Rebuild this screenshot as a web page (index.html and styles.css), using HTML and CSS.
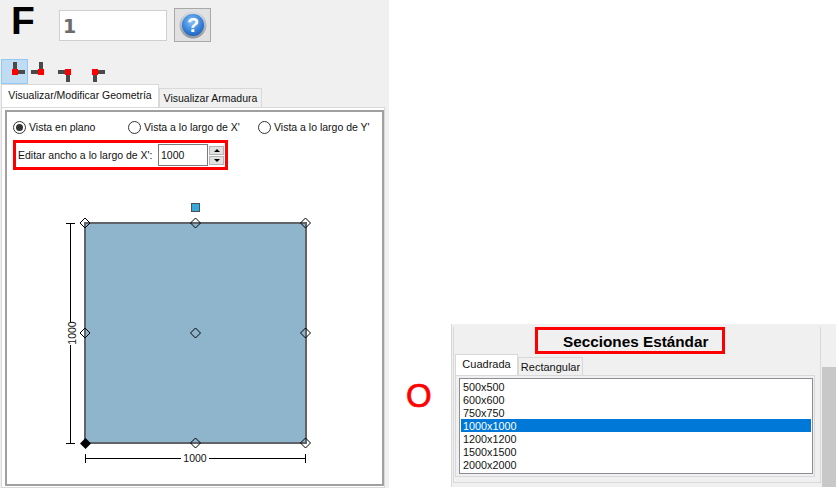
FILE: index.html
```html
<!DOCTYPE html>
<html lang="es">
<head>
<meta charset="utf-8">
<title>Secciones</title>
<link rel="stylesheet" href="styles.css">
</head>
<body>
<div class="page">
  <section class="left">
    <div class="head">
      <span class="big-f">F</span>
      <div class="name-input">1</div>
      <div class="help">
        <svg width="28" height="28" viewBox="0 0 28 28">
          <defs>
            <radialGradient id="ball" cx="45%" cy="35%" r="70%">
              <stop offset="0" stop-color="#8cc4f5"/>
              <stop offset=".6" stop-color="#3a86de"/>
              <stop offset="1" stop-color="#1c5cb4"/>
            </radialGradient>
            <linearGradient id="ring" x1="0" y1="0" x2="0" y2="1">
              <stop offset="0" stop-color="#d8dde2"/>
              <stop offset="1" stop-color="#8f969c"/>
            </linearGradient>
          </defs>
          <circle cx="14" cy="14" r="13.5" fill="url(#ring)"/>
          <circle cx="14" cy="14" r="11" fill="url(#ball)"/>
          <text x="14" y="21" class="help-q" text-anchor="middle">?</text>
        </svg>
      </div>
    </div>
    <div class="tools">
      <div class="tool tool-on">
        <svg width="27" height="25" viewBox="1 59 27 25"><path class="bar" d="M13 62h4v7h-4zM18 70h7v4h-7z"/><rect class="node" x="12" y="69" width="6" height="6"/></svg>
      </div>
      <div class="tool">
        <svg width="27" height="25" viewBox="28 59 27 25"><path class="bar" d="M39 62h4v7h-4zM31 70h7v4h-7z"/><rect class="node" x="38" y="69" width="6" height="6"/></svg>
      </div>
      <div class="tool">
        <svg width="27" height="25" viewBox="55 59 27 25"><path class="bar" d="M66 75h4v7h-4zM58 70h7v4h-7z"/><rect class="node" x="65" y="69" width="6" height="6"/></svg>
      </div>
      <div class="tool">
        <svg width="27" height="25" viewBox="82 59 27 25"><path class="bar" d="M93 75h4v7h-4zM98 70h7v4h-7z"/><rect class="node" x="92" y="69" width="6" height="6"/></svg>
      </div>
    </div>
    <div class="tabs">
      <div class="tab tab-on tab-geo">Visualizar/Modificar Geometría</div>
      <div class="tab tab-arm">Visualizar Armadura</div>
    </div>
    <div class="pane">
      <div class="frame">
        <div class="radios">
          <label class="radio radio-a"><span class="dot dot-on"></span>Vista en plano</label>
          <label class="radio radio-b"><span class="dot"></span>Vista a lo largo de X'</label>
          <label class="radio radio-c"><span class="dot"></span>Vista a lo largo de Y'</label>
        </div>
        <div class="edit">
          <span class="edit-label">Editar ancho a lo largo de X':</span>
          <div class="num">1000</div>
          <div class="spin">
            <div class="spin-btn"><span class="arrow-up"></span></div>
            <div class="spin-btn"><span class="arrow-down"></span></div>
          </div>
        </div>
        <svg class="geom" width="375" height="313" viewBox="7 172 375 313">
          <rect x="85" y="223" width="221" height="220" fill="#8fb5cc" stroke="#606468" stroke-width="2"/>
          <rect x="191.500" y="203.500" width="8" height="8" fill="#35a8dc" stroke="#505050"/>
          <g fill="none" stroke="#000">
            <path d="M85 218l5 5-5 5-5-5zM195.500 218l5 5-5 5-5-5zM305.500 218l5 5-5 5-5-5z"/>
            <path d="M85 328l5 5-5 5-5-5zM195.500 328l5 5-5 5-5-5zM305.500 328l5 5-5 5-5-5z"/>
            <path d="M195.500 438l5 5-5 5-5-5zM305.500 438l5 5-5 5-5-5z"/>
            <path d="M66 223.500h9M70.500 223.500V322M70.500 345V443.500M66 443.500h9"/>
            <path d="M85.500 454v9M85.500 458.500H181M209 458.500H305.500M305.500 454v9"/>
          </g>
          <path d="M85.500 438l5.500 5.500-5.500 5.500-5.500-5.500z" fill="#000"/>
          <text class="dim" x="195" y="462" text-anchor="middle">1000</text>
          <text class="dim" text-anchor="middle" transform="translate(76 333) rotate(-90)">1000</text>
        </svg>
      </div>
    </div>
  </section>
  <span class="or">O</span>
  <section class="right">
    <div class="right-main">
      <div class="right-body">
        <div class="title-wrap"><h2 class="title">Secciones Estándar</h2></div>
        <div class="tabs tabs-small">
          <div class="tab tab-on tab-cua">Cuadrada</div>
          <div class="tab tab-rec">Rectangular</div>
        </div>
        <div class="list-pane">
          <ul class="list">
            <li>500x500</li>
            <li>600x600</li>
            <li>750x750</li>
            <li class="sel">1000x1000</li>
            <li>1200x1200</li>
            <li>1500x1500</li>
            <li>2000x2000</li>
          </ul>
        </div>
      </div>
    </div>
    <div class="scroll"><div class="thumb"></div></div>
  </section>
</div>
</body>
</html>
```
FILE: styles.css
```css
* { box-sizing: border-box; }
html, body { margin: 0; padding: 0; background: #fff; }
body { font-family: "Liberation Sans", sans-serif; font-size: 10.5px; color: #111; overflow: hidden; }
.page { display: flex; width: 839px; height: 488px; }

.left { width: 389px; height: 488px; background: #f0f0f0; flex: none; display: flex; flex-direction: column; }
.head { display: flex; height: 58px; padding-left: 11px; position: relative; }
.big-f { font: bold 39px/42px "Liberation Sans", sans-serif; color: #000; width: 48px; height: 42px; }
.name-input { width: 108px; height: 31px; margin-top: 10px; background: #fff; border: 1px solid #cfcfcf; padding-left: 3px; font: bold 19px/31px "DejaVu Sans", sans-serif; color: #6c6c6c; }
.help { width: 37px; height: 34px; margin: 8px 0 0 7px; background: #e1e1e1; border: 1px solid #a8a8a8; display: flex; align-items: center; justify-content: center; }
.help-q { font: bold 20px "Liberation Sans", sans-serif; fill: #fff; }

.tools { display: flex; height: 26px; padding: 1px 0 0 1px; }
.tool { width: 27px; height: 25px; line-height: 0; }
.tool-on { background: #c0dcf3; box-shadow: inset 0 0 0 1px #90c8f6; }
.bar { fill: #4a4a4a; }
.node { fill: #f00; }

.tabs { display: flex; align-items: flex-end; height: 23px; padding-left: 1px; }
.tab { border: 1px solid #d9d9d9; border-bottom: 0; white-space: nowrap; text-align: center; }
.tab-on { background: #fff; }
.tab-geo { width: 158px; height: 23px; line-height: 20px; }
.tab-arm { width: 103px; height: 19px; line-height: 19px; background: #f0f0f0; }

.pane { flex: 1; margin: 0 4px 0 1px; background: #fff; border: 1px solid #d9d9d9; padding: 2px 0 0 3px; }
.frame { width: 379px; height: 376px; background: #fff; border: 2px solid #a0a0a0; }
.radios { position: relative; height: 28px; display: flex; padding: 8px 0 0 6px; }
.radio { display: flex; align-items: center; height: 14px; white-space: nowrap; }
.radio-a { width: 115px; }
.radio-b { width: 130px; }
.dot { width: 13px; height: 13px; border: 1px solid #333; border-radius: 50%; background: #fff; margin-right: 3px; flex: none; display: flex; align-items: center; justify-content: center; }
.dot-on::after { content: ""; width: 7px; height: 7px; border-radius: 50%; background: #333; }

.edit { width: 215px; height: 30px; margin-left: 6px; border: 3px solid #f00; display: flex; align-items: center; padding-left: 2px; background: #fff; }
.edit-label { width: 140px; white-space: nowrap; }
.num { width: 50px; height: 22px; border: 1px solid #7a7a7a; padding-left: 2px; line-height: 20px; }
.spin { width: 15px; margin-left: 1px; display: flex; flex-direction: column; gap: 1px; }
.spin-btn { height: 9px; background: #e1e1e1; border: 1px solid #b4b4b4; display: flex; align-items: center; justify-content: center; }
.arrow-up { border: 3px solid transparent; border-top: 0; border-bottom: 3px solid #000; }
.arrow-down { border: 3px solid transparent; border-bottom: 0; border-top: 3px solid #000; }
.geom { display: block; margin-top: 2px; }
.dim { font: 10.5px "Liberation Sans", sans-serif; fill: #111; }

.or { align-self: flex-end; margin: 0 0 73px 17px; width: 45px; font: 33px/38px "Liberation Sans", sans-serif; color: #f00; -webkit-text-stroke: 0.7px #f00; }

.right { width: 385px; height: 163px; margin-top: 324px; flex: none; display: flex; background: #f0f0f0; }
.right-main { width: 371px; height: 163px; padding: 0 1px 0 1px; border-left: 1px solid #d9d9d9; }
.right-body { height: 156px; border: 1px solid #d9d9d9; border-top: 0; padding: 0 2px 0 1px; width: 368px; }
.title-wrap { width: 190px; height: 27px; margin: 3px 0 0 80px; border: 3px solid #f00; background: #f0f0f0; padding-left: 25px; }
.title { margin: 0; font: bold 15.3px/23px "Liberation Sans", sans-serif; color: #000; white-space: nowrap; }
.tabs-small { height: 21px; padding-left: 0; }
.tab-cua { width: 63px; height: 21px; line-height: 18px; font-size: 11px; }
.tab-rec { width: 65px; height: 18px; line-height: 18px; font-size: 11px; background: #f0f0f0; }
.list-pane { width: 360px; height: 102px; border: 1px solid #d9d9d9; padding: 2px 1px 0 3px; background: #f0f0f0; }
.list { list-style: none; margin: 0; padding: 1px; width: 354px; height: 96px; background: #fff; border: 1px solid #8c8c94; font-size: 10.8px; line-height: 14px; }
.list li { padding-left: 2px; height: 13px; }
.list .sel { background: #0078d7; color: #fff; }
.scroll { width: 14px; height: 163px; padding-top: 43px; margin-left: 0; }
.thumb { height: 120px; background: #c8c8c8; }
```
